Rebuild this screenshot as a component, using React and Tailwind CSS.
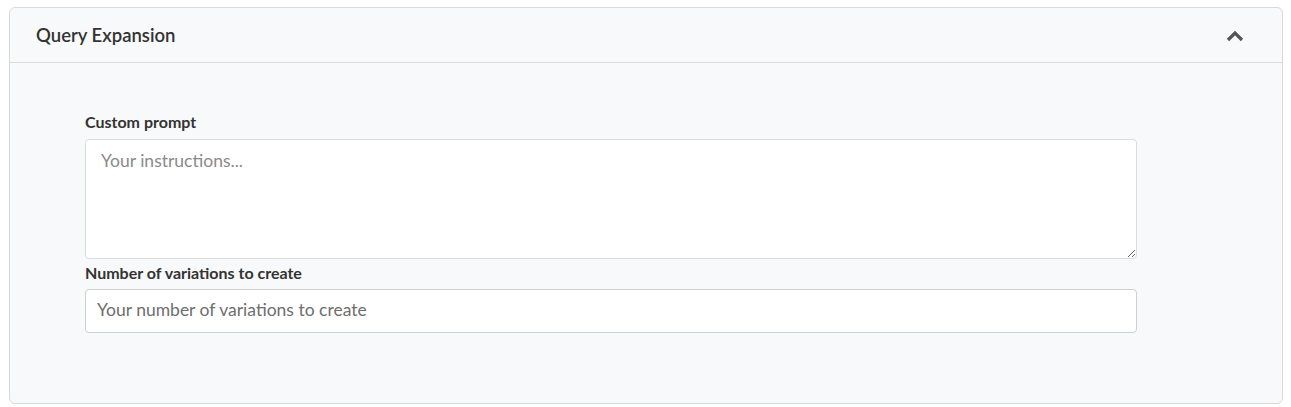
import React from "react";

export default function App() {
  return (
    <div className="w-[1291px] h-[407px] bg-white pt-[7px] pl-[9px] pr-[8px]" style={{ fontFamily: "Lato, 'Liberation Sans', sans-serif" }}>
      <div className="border border-[#d9d9d9] rounded-[6px] bg-[#f8f9fa] h-[397px] flex flex-col">
        <div className="h-[55px] border-b border-[#dcdcdc] flex items-center justify-between pl-[26px] pr-[38px]">
          <span className="text-[18.5px] font-semibold text-[#333] leading-[24px]">Query Expansion</span>
          <svg width="18" height="12" viewBox="0 0 18 12" className="mt-[1px]">
            <path d="M2 10 L9 3 L16 10" fill="none" stroke="#555" strokeWidth="3.2" strokeLinecap="butt" strokeLinejoin="miter" />
          </svg>
        </div>
        <div className="pl-[75px] pt-[49px]">
          <div className="w-[1052px] flex flex-col">
            <label className="text-[16px] font-bold text-[#333] leading-[20px] mb-[7px]">Custom prompt</label>
            <textarea
              placeholder="Your instructions..."
              className="h-[120px] bg-white border border-[#dcdcdc] rounded-[4px] px-[15px] pt-[9px] text-[17.5px] leading-[24px] text-[#333] placeholder:text-[#8a8a8a] outline-none"
            />
            <label className="text-[16px] font-bold text-[#333] leading-[20px] mt-[4px] mb-[6px]">Number of variations to create</label>
            <input
              placeholder="Your number of variations to create"
              className="h-[44px] bg-white border border-[#cfcfcf] rounded-[4px] px-[11px] pb-[3px] text-[17.5px] text-[#333] placeholder:text-[#6e6e6e] outline-none"
            />
          </div>
        </div>
      </div>
    </div>
  );
}
